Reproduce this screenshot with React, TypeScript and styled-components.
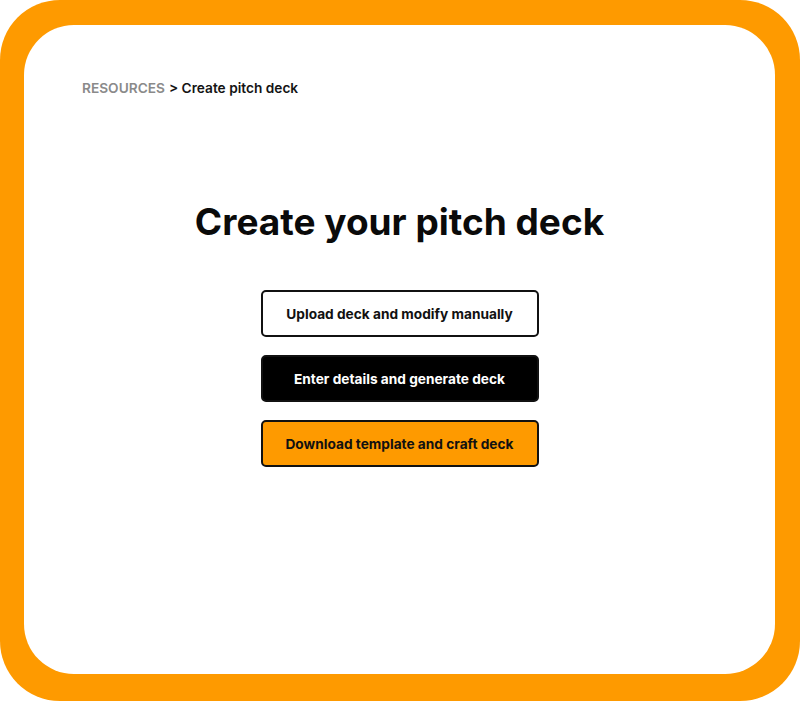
import styled, { createGlobalStyle } from 'styled-components';

const GlobalStyle = createGlobalStyle`
  html, body {
    margin: 0;
    padding: 0;
    background: #ffffff;
  }

  body {
    font-family: Inter, "Noto Sans", sans-serif;
  }
`;

type Variant = 'outline' | 'dark' | 'accent';

const options: { label: string, variant: Variant }[] = [
  { label: 'Upload deck and modify manually', variant: 'outline' },
  { label: 'Enter details and generate deck', variant: 'dark' },
  { label: 'Download template and craft deck', variant: 'accent' },
];

export default function App() {
  return <>
    <GlobalStyle />
    <Frame>
      <Card>
        <Breadcrumb>
          <Crumb>RESOURCES</Crumb>
          <Current>&gt; Create pitch deck</Current>
        </Breadcrumb>
        <Main>
          <Title>Create your pitch deck</Title>
          <Actions>
            {options.map((option) => (
              <ActionButton key={option.label} $variant={option.variant}>
                {option.label}
              </ActionButton>
            ))}
          </Actions>
        </Main>
      </Card>
    </Frame>
  </>;
}

const Frame = styled.div`
  width: 800px;
  height: 701px;
  padding: 25px 25px 27px 24px;

  box-sizing: border-box;
  background: #fe9a00;
  border-radius: 60px;
`;

const Card = styled.div`
  height: 100%;
  padding: 55px 58px 0px 58px;

  box-sizing: border-box;
  background: #ffffff;
  border-radius: 50px;
`;

const Breadcrumb = styled.div`
  display: flex;
  gap: 4px;

  font-size: 13.7px;
  font-weight: 600;
  line-height: 16px;
`;

const Crumb = styled.span`
  color: #8a8a8a;
`;

const Current = styled.span`
  color: #141414;
`;

const Main = styled.div`
  display: flex;
  flex-direction: column;
  align-items: center;

  margin-top: 104px;
`;

const Title = styled.h1`
  margin: 0px;

  font-size: 37px;
  font-weight: 700;
  line-height: 44px;
  color: #0a0a0a;
`;

const Actions = styled.div`
  display: flex;
  flex-direction: column;
  gap: 18px;

  margin-top: 46px;
`;

const variantColors: Record<Variant, { bg: string, fg: string }> = {
  outline: { bg: '#ffffff', fg: '#111111' },
  dark: { bg: '#000000', fg: '#ffffff' },
  accent: { bg: '#fe9a00', fg: '#111111' },
};

const ActionButton = styled.button<{ $variant: Variant }>`
  width: 278px;
  height: 47px;
  padding: 0px;

  border: 2px solid #111111;
  border-radius: 5px;
  background: ${({ $variant }) => variantColors[$variant].bg};
  color: ${({ $variant }) => variantColors[$variant].fg};

  font-family: Inter, "Noto Sans", sans-serif;
  font-size: 13.7px;
  font-weight: 700;
  cursor: pointer;
`;
